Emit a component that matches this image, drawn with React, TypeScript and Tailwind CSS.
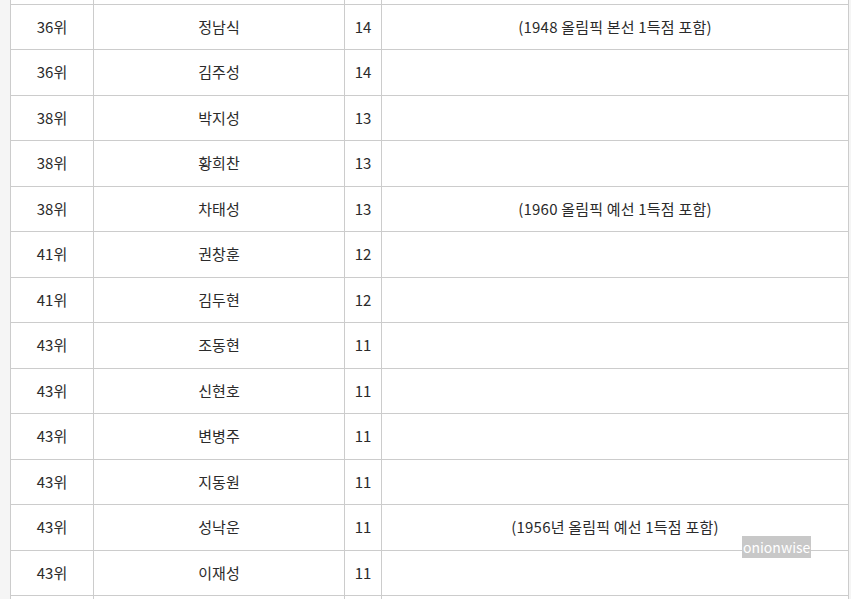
import React from "react";

const rows: [string, string, string, string][] = [
  ["36위", "정남식", "14", "(1948 올림픽 본선 1득점 포함)"],
  ["36위", "김주성", "14", ""],
  ["38위", "박지성", "13", ""],
  ["38위", "황희찬", "13", ""],
  ["38위", "차태성", "13", "(1960 올림픽 예선 1득점 포함)"],
  ["41위", "권창훈", "12", ""],
  ["41위", "김두현", "12", ""],
  ["43위", "조동현", "11", ""],
  ["43위", "신현호", "11", ""],
  ["43위", "변병주", "11", ""],
  ["43위", "지동원", "11", ""],
  ["43위", "성낙운", "11", "(1956년 올림픽 예선 1득점 포함)"],
  ["43위", "이재성", "11", ""],
  ["", "", "", ""],
];

export default function App() {
  return (
    <div
      className="w-[851px] h-[599px] overflow-hidden bg-[#f5f5f5] relative"
      style={{ fontFamily: '"Noto Sans CJK KR", "Noto Sans", sans-serif' }}
    >
      <div className="ml-[10px] w-[838px] bg-white -mt-[42px]">
        <table className="w-[838px] border-collapse table-fixed text-[15px] text-[#2b2b2b]">
          <colgroup>
            <col className="w-[83px]" />
            <col className="w-[251px]" />
            <col className="w-[37px]" />
            <col className="w-[467px]" />
          </colgroup>
          <tbody>
            <tr className="h-[45.5px]">
              <td className="border border-[#cccccc]" />
              <td className="border border-[#cccccc]" />
              <td className="border border-[#cccccc]" />
              <td className="border border-[#cccccc]" />
            </tr>
            {rows.map((r, i) => (
              <tr key={i} className="h-[45.5px]">
                {r.map((c, j) => (
                  <td
                    key={j}
                    className={
                      j === 3
                        ? "border border-[#cccccc] text-center align-middle p-0 leading-[20px] tracking-[0.2px]"
                        : "border border-[#cccccc] text-center align-middle p-0 leading-[20px]"
                    }
                  >
                    {c}
                  </td>
                ))}
              </tr>
            ))}
          </tbody>
        </table>
      </div>
      <div className="absolute left-[742px] top-[536px] h-[22px] px-[1px] bg-[#c8c8c8] text-white text-[14px] leading-[22px]">
        onionwise
      </div>
    </div>
  );
}
